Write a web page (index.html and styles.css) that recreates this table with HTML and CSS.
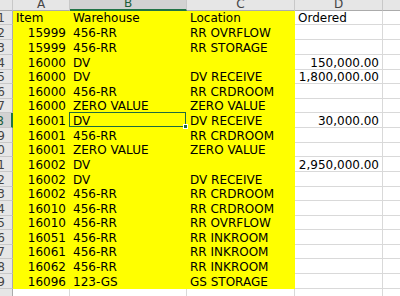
FILE: index.html
```html
<!DOCTYPE html>
<html>
<head>
<meta charset="utf-8">
<link rel="stylesheet" href="styles.css">
</head>
<body>
<div class="sheet">
  <div class="corner"></div><div class="ch">A</div><div class="ch csel">B</div><div class="ch">C</div><div class="ch">D</div><div class="ch"></div>

  <div class="rh"><span>1</span></div><div class="c y">Item</div><div class="c y">Warehouse</div><div class="c y">Location</div><div class="c">Ordered</div><div class="c"></div>
  <div class="rh"><span>2</span></div><div class="c y r">15999</div><div class="c y">456-RR</div><div class="c y">RR OVRFLOW</div><div class="c"></div><div class="c"></div>
  <div class="rh"><span>3</span></div><div class="c y r">15999</div><div class="c y">456-RR</div><div class="c y">RR STORAGE</div><div class="c"></div><div class="c"></div>
  <div class="rh"><span>4</span></div><div class="c y r">16000</div><div class="c y">DV</div><div class="c y"></div><div class="c r">150,000.00</div><div class="c"></div>
  <div class="rh"><span>5</span></div><div class="c y r">16000</div><div class="c y">DV</div><div class="c y">DV RECEIVE</div><div class="c r">1,800,000.00</div><div class="c"></div>
  <div class="rh"><span>6</span></div><div class="c y r">16000</div><div class="c y">456-RR</div><div class="c y">RR CRDROOM</div><div class="c"></div><div class="c"></div>
  <div class="rh"><span>7</span></div><div class="c y r">16000</div><div class="c y">ZERO VALUE</div><div class="c y">ZERO VALUE</div><div class="c"></div><div class="c"></div>
  <div class="rh rsel"><span>8</span></div><div class="c y r">16001</div><div class="c y sel">DV</div><div class="c y">DV RECEIVE</div><div class="c r">30,000.00</div><div class="c"></div>
  <div class="rh"><span>9</span></div><div class="c y r">16001</div><div class="c y">456-RR</div><div class="c y">RR CRDROOM</div><div class="c"></div><div class="c"></div>
  <div class="rh"><span>10</span></div><div class="c y r">16001</div><div class="c y">ZERO VALUE</div><div class="c y">ZERO VALUE</div><div class="c"></div><div class="c"></div>
  <div class="rh"><span>11</span></div><div class="c y r">16002</div><div class="c y">DV</div><div class="c y"></div><div class="c r">2,950,000.00</div><div class="c"></div>
  <div class="rh"><span>12</span></div><div class="c y r">16002</div><div class="c y">DV</div><div class="c y">DV RECEIVE</div><div class="c"></div><div class="c"></div>
  <div class="rh"><span>13</span></div><div class="c y r">16002</div><div class="c y">456-RR</div><div class="c y">RR CRDROOM</div><div class="c"></div><div class="c"></div>
  <div class="rh"><span>14</span></div><div class="c y r">16010</div><div class="c y">456-RR</div><div class="c y">RR CRDROOM</div><div class="c"></div><div class="c"></div>
  <div class="rh"><span>15</span></div><div class="c y r">16010</div><div class="c y">456-RR</div><div class="c y">RR OVRFLOW</div><div class="c"></div><div class="c"></div>
  <div class="rh"><span>16</span></div><div class="c y r">16051</div><div class="c y">456-RR</div><div class="c y">RR INKROOM</div><div class="c"></div><div class="c"></div>
  <div class="rh"><span>17</span></div><div class="c y r">16061</div><div class="c y">456-RR</div><div class="c y">RR INKROOM</div><div class="c"></div><div class="c"></div>
  <div class="rh"><span>18</span></div><div class="c y r">16062</div><div class="c y">456-RR</div><div class="c y">RR INKROOM</div><div class="c"></div><div class="c"></div>
  <div class="rh"><span>19</span></div><div class="c y r">16096</div><div class="c y">123-GS</div><div class="c y">GS STORAGE</div><div class="c"></div><div class="c"></div>
  <div class="rh"><span>20</span></div><div class="c"></div><div class="c"></div><div class="c"></div><div class="c"></div><div class="c"></div>
</div>
</body>
</html>
```

FILE: styles.css
```css
html, body {
  margin: 0;
  padding: 0;
  background: #ffffff;
  overflow: hidden;
}

body {
  width: 400px;
  height: 296px;
}

.sheet {
  display: grid;
  grid-template-columns: 13px 57px 117px 108px 88px 18px;
  grid-template-rows: 11px 14px 15px 15px 15px 14px 15px 14px 15px 15px 14px 15px 15px 14px 15px 14px 15px 14px 15px 15px 20px;
  font-family: "DejaVu Sans", Verdana, sans-serif;
  font-size: 12px;
  color: #000000;
}

.corner,
.ch {
  background: #e6e6e6;
  border-right: 1px solid #c8c8c8;
  border-bottom: 1px solid #ababab;
}

.ch {
  display: flex;
  justify-content: center;
  align-items: flex-end;
  line-height: 11px;
  color: #444444;
  overflow: hidden;
}

.ch.csel {
  background: #d2d2d2;
  border-bottom: 2px solid #217346;
  color: #1d5e3a;
}

.rh {
  display: flex;
  justify-content: flex-end;
  align-items: flex-end;
  padding-right: 7px;
  background: #e6e6e6;
  border-right: 1px solid #ababab;
  border-bottom: 1px solid #c8c8c8;
  color: #444444;
  line-height: 11px;
  overflow: hidden;
  white-space: nowrap;
}

.rh.rsel {
  background: #d2d2d2;
  border-right: 2px solid #217346;
  color: #1d5e3a;
}

.c {
  display: flex;
  align-items: flex-end;
  padding: 0 3px;
  line-height: 11px;
  white-space: nowrap;
  border-right: 1px solid #d9d9d9;
  border-bottom: 1px solid #d9d9d9;
  min-width: 0;
}

.c.r {
  justify-content: flex-end;
}

.c.y {
  background: #ffff00;
  border-color: #ffff00;
}

.sel {
  position: relative;
  z-index: 1;
}

.sel::before {
  content: "";
  position: absolute;
  left: -1px;
  top: -1px;
  right: 0;
  bottom: 0;
  border: 1px solid #1e6b40;
}

.sel::after {
  content: "";
  position: absolute;
  right: -2px;
  bottom: -2px;
  width: 3px;
  height: 3px;
  background: #1e6b40;
  border: 1px solid #ffffff;
}
```
